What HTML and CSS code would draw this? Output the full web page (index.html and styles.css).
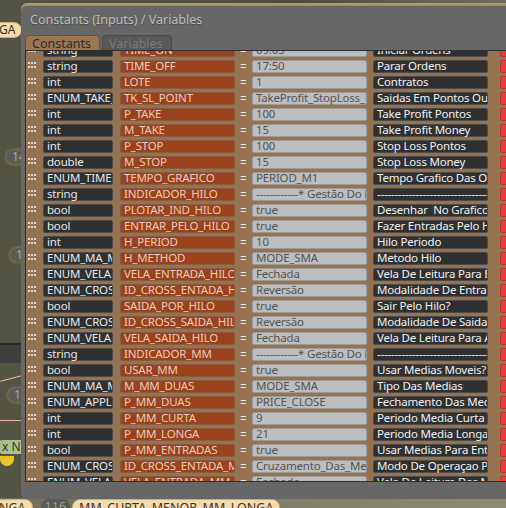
FILE: index.html
```html
<!DOCTYPE html>
<html lang="en">
<head>
  <meta charset="UTF-8" />
  <title>Constants (Inputs) / Variables</title>
  <link rel="stylesheet" href="styles.css">
</head>
<body>
  <div class="canvas">
    <div class="pill tan pill-ga">GA</div>
    <div class="pill grey pill-14">14</div>
    <div class="pill grey pill-1">1</div>
    <div class="band"></div>
    <div class="wire wire-a"></div>
    <div class="wire wire-b"></div>
    <div class="pill grey pill-13">13</div>
    <div class="pill green pill-xn">x N°</div>
    <div class="blob"></div>
    <div class="bottom-bar">
      <span class="pill tan">NGA</span>
      <span class="pill dark">116</span>
      <span class="pill tan">MM_CURTA_MENOR_MM_LONGA</span>
    </div>

    <div class="dialog">
      <div class="dialog-title">Constants (Inputs) / Variables</div>
      <div class="tabs">
        <div class="tab active">Constants</div>
        <div class="tab">Variables</div>
      </div>
      <div class="panel">
        <div class="rows">
          <div class="row"><span class="grip"></span><span class="box type">string</span><span class="box name">TIME_ON</span><span class="eq">=</span><span class="box value">09:05</span><span class="box desc">Iniciar Ordens</span><span class="box flag"></span></div>
          <div class="row"><span class="grip"></span><span class="box type">string</span><span class="box name">TIME_OFF</span><span class="eq">=</span><span class="box value">17:50</span><span class="box desc">Parar Ordens</span><span class="box flag"></span></div>
          <div class="row"><span class="grip"></span><span class="box type">int</span><span class="box name">LOTE</span><span class="eq">=</span><span class="box value">1</span><span class="box desc">Contratos</span><span class="box flag"></span></div>
          <div class="row"><span class="grip"></span><span class="box type">ENUM_TAKE_STOP</span><span class="box name">TK_SL_POINT</span><span class="eq">=</span><span class="box value">TakeProfit_StopLoss_Pontos</span><span class="box desc">Saidas Em Pontos Ou Money</span><span class="box flag"></span></div>
          <div class="row"><span class="grip"></span><span class="box type">int</span><span class="box name">P_TAKE</span><span class="eq">=</span><span class="box value">100</span><span class="box desc">Take Profit Pontos</span><span class="box flag"></span></div>
          <div class="row"><span class="grip"></span><span class="box type">int</span><span class="box name">M_TAKE</span><span class="eq">=</span><span class="box value">15</span><span class="box desc">Take Profit Money</span><span class="box flag"></span></div>
          <div class="row"><span class="grip"></span><span class="box type">int</span><span class="box name">P_STOP</span><span class="eq">=</span><span class="box value">100</span><span class="box desc">Stop Loss Pontos</span><span class="box flag"></span></div>
          <div class="row"><span class="grip"></span><span class="box type">double</span><span class="box name">M_STOP</span><span class="eq">=</span><span class="box value">15</span><span class="box desc">Stop Loss Money</span><span class="box flag"></span></div>
          <div class="row"><span class="grip"></span><span class="box type">ENUM_TIMEFRAMES</span><span class="box name">TEMPO_GRAFICO</span><span class="eq">=</span><span class="box value">PERIOD_M1</span><span class="box desc">Tempo Grafico Das Operações</span><span class="box flag"></span></div>
          <div class="row"><span class="grip"></span><span class="box type">string</span><span class="box name">INDICADOR_HILO</span><span class="eq">=</span><span class="box value">------------* Gestão Do Hilo *------------</span><span class="box desc">------------------------------------------------------</span><span class="box flag"></span></div>
          <div class="row"><span class="grip"></span><span class="box type">bool</span><span class="box name">PLOTAR_IND_HILO</span><span class="eq">=</span><span class="box value">true</span><span class="box desc">Desenhar&nbsp; No Grafico</span><span class="box flag"></span></div>
          <div class="row"><span class="grip"></span><span class="box type">bool</span><span class="box name">ENTRAR_PELO_HILO</span><span class="eq">=</span><span class="box value">true</span><span class="box desc">Fazer Entradas Pelo Hilo</span><span class="box flag"></span></div>
          <div class="row"><span class="grip"></span><span class="box type">int</span><span class="box name">H_PERIOD</span><span class="eq">=</span><span class="box value">10</span><span class="box desc">Hilo Periodo</span><span class="box flag"></span></div>
          <div class="row"><span class="grip"></span><span class="box type">ENUM_MA_METHOD</span><span class="box name">H_METHOD</span><span class="eq">=</span><span class="box value">MODE_SMA</span><span class="box desc">Metodo Hilo</span><span class="box flag"></span></div>
          <div class="row"><span class="grip"></span><span class="box type">ENUM_VELA</span><span class="box name">VELA_ENTRADA_HILO</span><span class="eq">=</span><span class="box value">Fechada</span><span class="box desc">Vela De Leitura Para Entrada</span><span class="box flag"></span></div>
          <div class="row"><span class="grip"></span><span class="box type">ENUM_CROSS</span><span class="box name">ID_CROSS_ENTADA_HILO</span><span class="eq">=</span><span class="box value">Reversão</span><span class="box desc">Modalidade De Entrada</span><span class="box flag"></span></div>
          <div class="row"><span class="grip"></span><span class="box type">bool</span><span class="box name">SAIDA_POR_HILO</span><span class="eq">=</span><span class="box value">true</span><span class="box desc">Sair Pelo Hilo?</span><span class="box flag"></span></div>
          <div class="row"><span class="grip"></span><span class="box type">ENUM_CROSS</span><span class="box name">ID_CROSS_SAIDA_HILO</span><span class="eq">=</span><span class="box value">Reversão</span><span class="box desc">Modalidade De Saida Hilo</span><span class="box flag"></span></div>
          <div class="row"><span class="grip"></span><span class="box type">ENUM_VELA</span><span class="box name">VELA_SAIDA_HILO</span><span class="eq">=</span><span class="box value">Fechada</span><span class="box desc">Vela De Leitura Para A Saida</span><span class="box flag"></span></div>
          <div class="row"><span class="grip"></span><span class="box type">string</span><span class="box name">INDICADOR_MM</span><span class="eq">=</span><span class="box value">------------* Gestão Do MM *------------</span><span class="box desc">------------------------------------------------------</span><span class="box flag"></span></div>
          <div class="row"><span class="grip"></span><span class="box type">bool</span><span class="box name">USAR_MM</span><span class="eq">=</span><span class="box value">true</span><span class="box desc">Usar Medias Moveis?</span><span class="box flag"></span></div>
          <div class="row"><span class="grip"></span><span class="box type">ENUM_MA_METHOD</span><span class="box name">M_MM_DUAS</span><span class="eq">=</span><span class="box value">MODE_SMA</span><span class="box desc">Tipo Das Medias</span><span class="box flag"></span></div>
          <div class="row"><span class="grip"></span><span class="box type">ENUM_APPLIED_PRICE</span><span class="box name">P_MM_DUAS</span><span class="eq">=</span><span class="box value">PRICE_CLOSE</span><span class="box desc">Fechamento Das Medias</span><span class="box flag"></span></div>
          <div class="row"><span class="grip"></span><span class="box type">int</span><span class="box name">P_MM_CURTA</span><span class="eq">=</span><span class="box value">9</span><span class="box desc">Periodo Media Curta</span><span class="box flag"></span></div>
          <div class="row"><span class="grip"></span><span class="box type">int</span><span class="box name">P_MM_LONGA</span><span class="eq">=</span><span class="box value">21</span><span class="box desc">Periodo Media Longa</span><span class="box flag"></span></div>
          <div class="row"><span class="grip"></span><span class="box type">bool</span><span class="box name">P_MM_ENTRADAS</span><span class="eq">=</span><span class="box value">true</span><span class="box desc">Usar Medias Para Entradas</span><span class="box flag"></span></div>
          <div class="row"><span class="grip"></span><span class="box type">ENUM_CROSS</span><span class="box name">ID_CROSS_ENTADA_MM</span><span class="eq">=</span><span class="box value">Cruzamento_Das_Medias</span><span class="box desc">Modo De Operaçao Para MM</span><span class="box flag"></span></div>
          <div class="row"><span class="grip"></span><span class="box type">ENUM_VELA</span><span class="box name">VELA_ENTRADA_MM</span><span class="eq">=</span><span class="box value">Fechada</span><span class="box desc">Vela De Leitura Das Medias</span><span class="box flag"></span></div>
        </div>
      </div>
    </div>
  </div>
</body>
</html>
```
FILE: styles.css
```css
body {
  margin: 0;
  font-family: 'Noto Sans', 'Open Sans', sans-serif;
  font-size: 12px;
  background: #4f4f41;
}

.canvas {
  position: relative;
  width: 506px;
  height: 508px;
  overflow: hidden;
  background: linear-gradient(90deg, #545445, #4d4d40 60%, #6f6f5c);
}

/* node editor bits peeking out behind the dialog */
.pill {
  position: absolute;
  height: 14px;
  line-height: 14px;
  padding: 0 6px;
  border-radius: 8px;
  font-size: 12px;
  white-space: nowrap;
}

.pill.tan {
  background: #f3dcae;
  color: #3b3326;
  border: 1px solid #c9ad7c;
}

.pill.grey {
  background: #5b5b57;
  color: #a9a9a2;
  box-shadow: 0 0 3px #b8a440;
}

.pill.green {
  background: #a9c08f;
  color: #2e3a22;
}

.pill-ga { left: -8px; top: 22px; }
.pill-14 { left: 6px; top: 150px; }
.pill-1 { left: 10px; top: 248px; }
.pill-13 { left: 8px; top: 388px; }
.pill-xn { left: -4px; top: 440px; }

.band {
  position: absolute;
  left: 0;
  top: 343px;
  width: 22px;
  height: 18px;
  background: #3e3e3c;
  border-top: 2px solid #2a2a2a;
}

.wire {
  position: absolute;
  left: 0;
  width: 22px;
  height: 1px;
  background: #e6b6a4;
}

.wire-a { top: 420px; }
.wire-b { top: 378px; transform: rotate(-14deg); }

.blob {
  position: absolute;
  left: 0;
  top: 456px;
  width: 14px;
  height: 10px;
  border-radius: 0 0 8px 8px;
  background: #e8c526;
}

.bottom-bar {
  position: absolute;
  left: -8px;
  top: 498px;
  right: 0;
  height: 10px;
  display: flex;
  gap: 8px;
  background: linear-gradient(90deg, #6d6d5b, #8c8c76);
}

.bottom-bar .pill {
  position: static;
  height: 16px;
  line-height: 16px;
  margin-top: 1px;
  font-size: 12.5px;
}

.bottom-bar .pill.dark {
  background: #5a5a58;
  color: #9c9c98;
  padding: 0 4px;
  margin-right: -6px;
}

.dialog {
  position: absolute;
  left: 21px;
  top: 5px;
  width: 520px;
  height: 493px;
  background: #676767;
  border-radius: 6px 0 0 6px;
  border-top: 1px solid #8c8c7a;
  box-shadow: 0 -2px 0 #a99a6a;
}

.dialog-title {
  height: 29px;
  line-height: 27px;
  padding-left: 9px;
  font-size: 12.5px;
  color: #bdbdbd;
  text-shadow: 0 1px 1px #4a4a4a;
}

.tabs {
  display: flex;
  gap: 2px;
  margin-left: 4px;
  height: 15px;
}

.tab {
  width: 62px;
  padding-left: 6px;
  line-height: 16px;
  font-size: 12.5px;
  background: #585858;
  color: #7b7b7b;
  border: 1px solid #4a4a4a;
  border-bottom: none;
  border-radius: 4px 4px 0 0;
}

.tab.active {
  width: 67px;
  background: #9c7653;
  color: #2c2c2c;
  border-color: #6c5038;
}

.panel {
  margin-left: 4px;
  height: 430px;
  background: #957252;
  border: 1px solid #2f2f2f;
  border-right: none;
  overflow: hidden;
}

.rows {
  margin-top: -7px;
}

.row {
  display: flex;
  height: 16px;
  padding-left: 2px;
}

.grip {
  width: 9px;
  height: 13px;
  margin-right: 6px;
  position: relative;
}

.grip::before {
  content: "";
  position: absolute;
  left: 0;
  top: 2px;
  width: 2px;
  height: 2px;
  background: #d8d8d8;
  box-shadow: 3px 0 #d8d8d8, 6px 0 #d8d8d8,
    0 4px #d8d8d8, 3px 4px #d8d8d8, 6px 4px #d8d8d8;
}

.box {
  box-sizing: border-box;
  height: 13px;
  line-height: 9px;
  padding-left: 3px;
  border: 1px solid;
  border-radius: 2px;
  font-size: 11.5px;
  letter-spacing: -0.2px;
  white-space: nowrap;
  overflow-x: clip;
  overflow-y: visible;
}

.type {
  width: 70px;
  margin-right: 7px;
  background: #303030;
  border-color: #4b4b4b;
  color: #e8e8e8;
}

.name {
  width: 115px;
  background: #9a411d;
  border-color: #8a5a3e;
  color: #ecc9b8;
}

.eq {
  width: 17px;
  text-align: center;
  line-height: 13px;
  color: #e8e8e8;
}

.value {
  width: 115px;
  margin-right: 6px;
  background: #bdbdbd;
  border-color: #9a9a9a;
  color: #555;
}

.desc {
  width: 115px;
  margin-right: 12px;
  background: #303030;
  border-color: #4b4b4b;
  color: #f2f2f2;
}

.flag {
  width: 12px;
  background: #ea3b3b;
  border-color: #c23030;
}
```
